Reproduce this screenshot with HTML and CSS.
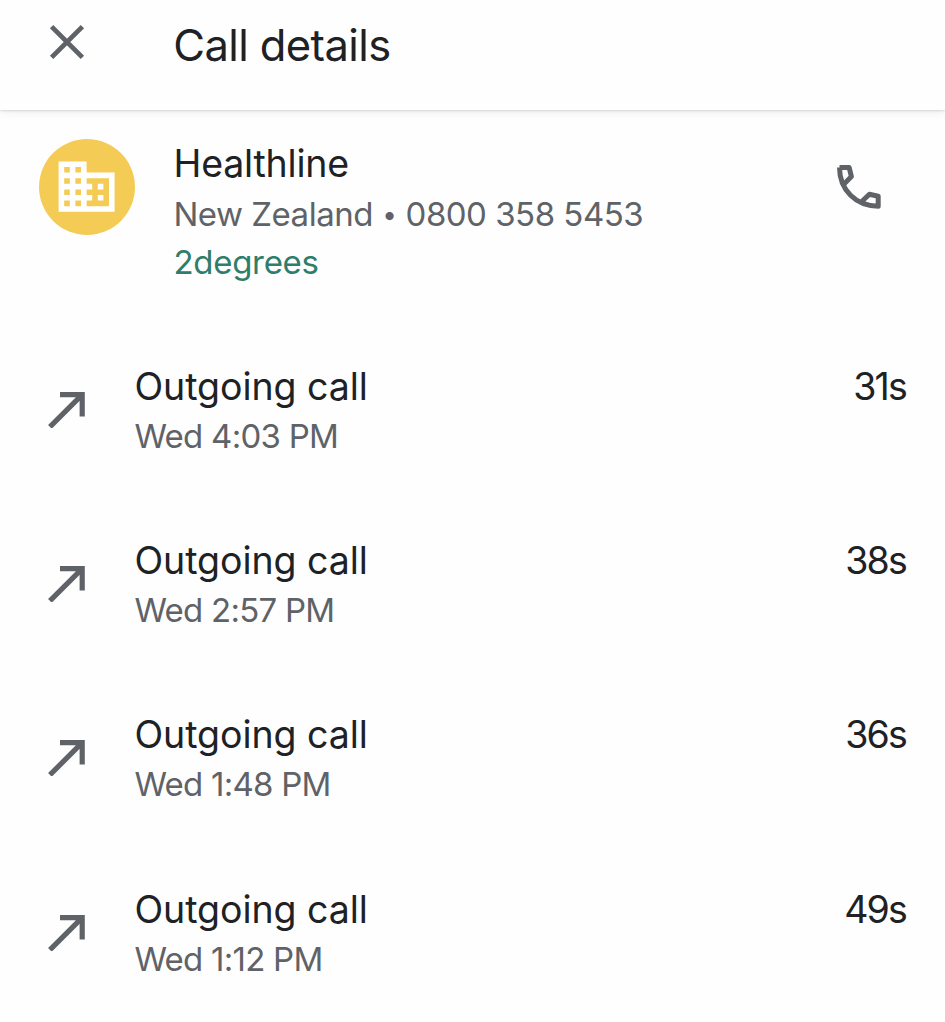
FILE: index.html
```html
<!DOCTYPE html>
<html lang="en">
<head>
<meta charset="utf-8">
<title>Call details</title>
<link rel="stylesheet" href="styles.css">
</head>
<body>
<svg class="symbols" aria-hidden="true">
  <symbol id="outgoing" viewBox="0 0 40 40">
    <path d="M13 6.6H35.2V28.6M35.2 6.6L2.9 38.9" fill="none" stroke="currentColor" stroke-width="5.2"/>
  </symbol>
</svg>
<header class="bar">
  <svg class="close" viewBox="0 0 36 36"><path d="M2.6 2.6L33.4 33.4M33.4 2.6L2.6 33.4" fill="none" stroke="currentColor" stroke-width="4.8"/></svg>
  <h1 class="title">Call details</h1>
</header>
<main>
  <section class="contact">
    <div class="avatar">
      <svg class="building" viewBox="0 0 24 24"><path fill="currentColor" d="M12 7V3H2v18h20V7H12zM6 19H4v-2h2v2zm0-4H4v-2h2v2zm0-4H4V9h2v2zm0-4H4V5h2v2zm4 12H8v-2h2v2zm0-4H8v-2h2v2zm0-4H8V9h2v2zm0-4H8V5h2v2zm10 12h-8v-2h2v-2h-2v-2h2v-2h-2V9h8v10zm-2-8h-2v2h2v-2zm0 4h-2v2h2v-2z"/></svg>
    </div>
    <div class="info">
      <div class="name">Healthline</div>
      <div class="number">New Zealand <span class="dot">•</span> 0800 358 5453</div>
      <div class="carrier">2degrees</div>
    </div>
    <svg class="phone" viewBox="17 15 44 44"><path d="M19.5 17.6C19.5 40 36 56.2 58.2 56.2V46.2L49.4 44.2L41 52.2M19.5 17.6H29.2L31.4 26.6L23.6 34.4" fill="none" stroke="currentColor" stroke-width="5" stroke-linejoin="round"/></svg>
  </section>
  <ul class="calls">
    <li class="call">
      <svg class="arrow"><use href="#outgoing"/></svg>
      <div class="what"><div class="kind">Outgoing call</div><div class="time">Wed 4:03 PM</div></div>
      <div class="length">31s</div>
    </li>
    <li class="call">
      <svg class="arrow"><use href="#outgoing"/></svg>
      <div class="what"><div class="kind">Outgoing call</div><div class="time">Wed 2:57 PM</div></div>
      <div class="length">38s</div>
    </li>
    <li class="call">
      <svg class="arrow"><use href="#outgoing"/></svg>
      <div class="what"><div class="kind">Outgoing call</div><div class="time">Wed 1:48 PM</div></div>
      <div class="length">36s</div>
    </li>
    <li class="call">
      <svg class="arrow"><use href="#outgoing"/></svg>
      <div class="what"><div class="kind">Outgoing call</div><div class="time">Wed 1:12 PM</div></div>
      <div class="length">49s</div>
    </li>
  </ul>
</main>
</body>
</html>
```
FILE: styles.css
```css
* { box-sizing: border-box; }
body {
  margin: 0;
  height: 1022px;
  overflow: hidden;
  background: #fefefe;
  color: #202124;
  font-family: Inter, Roboto, sans-serif;
}
.symbols { display: none; }
.bar {
  display: flex;
  height: 110px;
  padding: 15px 0 0 49.3px;
  background: #fefefe;
  box-shadow: 0 1px 2px rgba(0,0,0,.12), 0 2px 10px rgba(0,0,0,.07);
}
.close { width: 36px; height: 36px; margin-top: 9.2px; color: #5f6368; }
.title { margin: 0 0 0 88px; font-size: 43.5px; line-height: 60px; font-weight: 400; letter-spacing: -0.6px; }
.contact { display: flex; height: 216px; padding: 29px 64px 0 38.5px; }
.avatar {
  display: grid;
  place-items: center;
  width: 96px;
  height: 96px;
  border-radius: 50%;
  background: #f4cb55;
  color: #fff;
}
.building { width: 67.2px; height: 67.2px; }
.info { flex: 1; margin-left: 39px; white-space: nowrap; }
.name { font-size: 37.5px; line-height: 50px; letter-spacing: -0.2px; }
.number { height: 50px; font-size: 33px; line-height: 50px; letter-spacing: -0.5px; color: #5f6368; }
.dot { margin: 0 0.5px; font-size: 26px; line-height: 1; vertical-align: 2px; }
.carrier { font-size: 33px; line-height: 47px; letter-spacing: -0.3px; color: #2f7d6b; }
.phone { width: 44px; height: 44px; margin-top: 26px; color: #5f6368; }
.calls { margin: 0; padding: 0; list-style: none; }
.call { display: flex; height: 174.2px; padding: 35px 39px 0 47px; }
.arrow { width: 40px; height: 40px; margin-top: 27px; color: #5f6368; }
.what { flex: 1; margin-left: 47.5px; white-space: nowrap; }
.kind { font-size: 37.5px; line-height: 51px; letter-spacing: -0.05px; }
.time { font-size: 33px; line-height: 49px; letter-spacing: -0.75px; color: #5f6368; }
.length { font-size: 37.5px; line-height: 51px; letter-spacing: -1.8px; }
```
